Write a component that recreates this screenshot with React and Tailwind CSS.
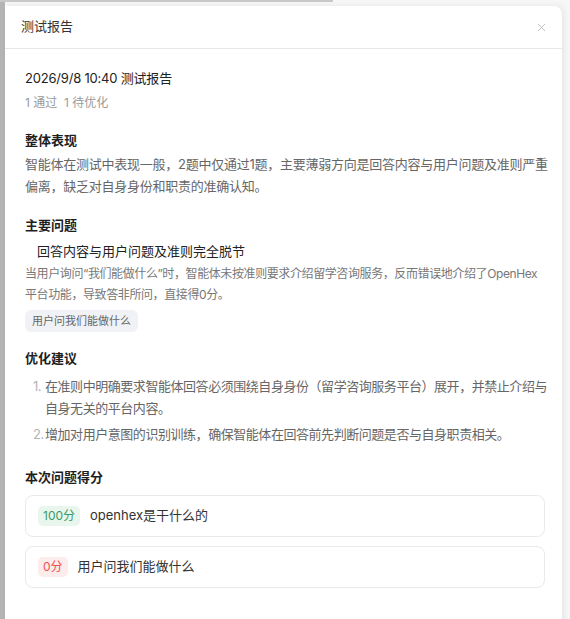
import { X } from "lucide-react";

const scores = [
  { score: "100分", text: "openhex是干什么的", tone: "green" },
  { score: "0分", text: "用户问我们能做什么", tone: "red" },
];

const tips = [
  "在准则中明确要求智能体回答必须围绕自身身份（留学咨询服务平台）展开，并禁止介绍与自身无关的平台内容。",
  "增加对用户意图的识别训练，确保智能体在回答前先判断问题是否与自身职责相关。",
];

function SectionTitle({ children }) {
  return <h3 className="text-[13px] font-bold leading-5 text-[#1f1f1f]">{children}</h3>;
}

export default function App() {
  return (
    <div
      className="relative h-[619px] w-[570px] overflow-hidden bg-[#f7f7f7]"
      style={{ fontFamily: 'Inter, "Noto Sans CJK SC", "Noto Sans", sans-serif' }}
    >
      {/* backdrop bits */}
      <div className="absolute left-0 top-0 h-full w-[5px] bg-[#b4b4b4]" />
      <div className="absolute left-0 top-0 h-[2px] w-[333px] bg-[#c8c8c8]" />

      <div className="absolute left-[5px] top-[6px] h-[640px] w-[557px] rounded-tr-lg bg-white shadow-[2px_0_6px_rgba(0,0,0,0.08)]">
        <div className="flex h-[43px] items-center justify-between border-b border-[#e8e8e8] pl-[16px] pr-[14px]">
          <span className="text-[13px] text-[#333]">测试报告</span>
          <X size={13} strokeWidth={1.4} className="text-[#b0b0b0]" />
        </div>

        <div className="pl-[20px] pr-[12px] pt-[19px]">
          <div className="text-[13px] leading-5 tracking-[-0.2px] text-[#222]">2026/9/8 10:40 测试报告</div>
          <div className="mt-[5px] text-[12px] leading-5 text-[#9a9a9a]">1 通过&nbsp;&nbsp;1 待优化</div>

          <div className="mt-[17px]">
            <SectionTitle>整体表现</SectionTitle>
            <p className="mt-[3px] text-[13px] leading-[22px] tracking-[-0.25px] text-[#666]">
              智能体在测试中表现一般，2题中仅通过1题，主要薄弱方向是回答内容与用户问题及准则严重偏离，缺乏对自身身份和职责的准确认知。
            </p>
          </div>

          <div className="mt-[18px]">
            <SectionTitle>主要问题</SectionTitle>
            <div className="mt-[6px] pl-[12px] text-[13px] leading-5 text-[#222]">回答内容与用户问题及准则完全脱节</div>
            <p className="mt-[2px] pr-[8px] text-[12px] leading-[21px] tracking-[-0.4px] text-[#777]">
              当用户询问“我们能做什么”时，智能体未按准则要求介绍留学咨询服务，反而错误地介绍了OpenHex平台功能，导致答非所问，直接得0分。
            </p>
            <span className="mt-[5px] inline-flex h-[22px] items-center rounded-md bg-[#f1f2f6] px-[7px] text-[11px] text-[#666]">
              用户问我们能做什么
            </span>
          </div>

          <div className="mt-[16px]">
            <SectionTitle>优化建议</SectionTitle>
            <ol className="mt-[7px] pl-[8px]">
              {tips.map((t, i) => (
                <li key={i} className="flex text-[13px] leading-[22px] text-[#666] [&+li]:mt-[4px]">
                  <span className="w-[12px] shrink-0 tracking-[-0.5px] text-[#b5b5b5]">{i + 1}.</span>
                  <span className="tracking-[-0.45px]">{t}</span>
                </li>
              ))}
            </ol>
          </div>

          <div className="mt-[22px]">
            <SectionTitle>本次问题得分</SectionTitle>
            <div className="mr-[5px] mt-[8px] flex flex-col gap-[9px]">
              {scores.map((s) => (
                <div
                  key={s.text}
                  className="flex h-[42px] items-center gap-[10px] rounded-lg border border-[#e9e9ee] pl-[12px]"
                >
                  <span
                    className={
                      s.tone === "green"
                        ? "rounded-[5px] bg-[#e8f6ee] px-[5px] text-[12px] leading-5 text-[#3c9a5f]"
                        : "rounded-[5px] bg-[#fdecec] px-[5px] text-[12px] leading-5 text-[#f05252]"
                    }
                  >
                    {s.score}
                  </span>
                  <span className="text-[13px] text-[#333]">{s.text}</span>
                </div>
              ))}
            </div>
          </div>
        </div>
      </div>
    </div>
  );
}
